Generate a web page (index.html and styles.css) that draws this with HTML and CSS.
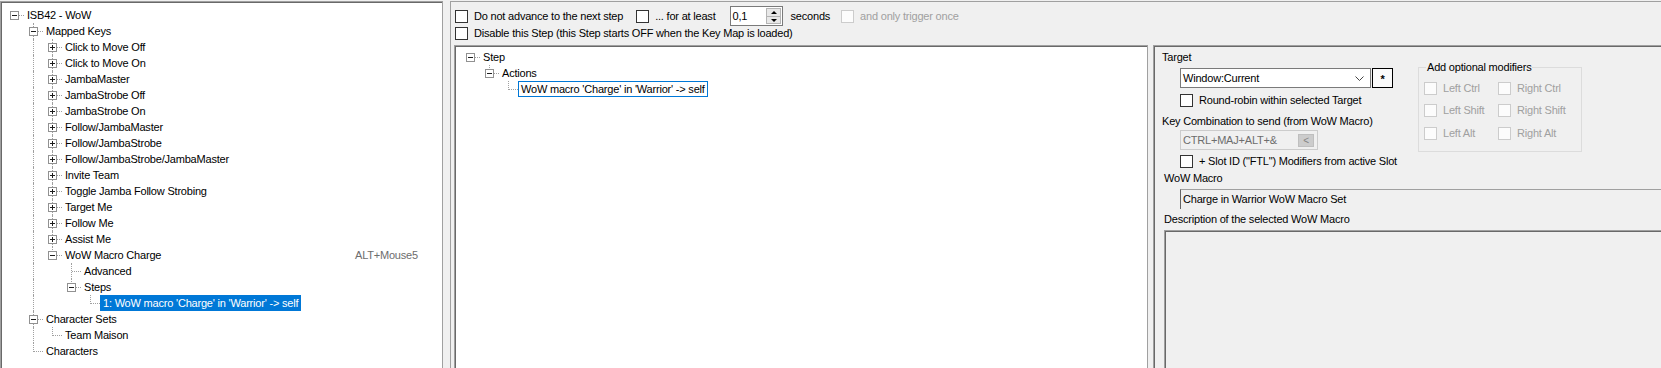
FILE: index.html
```html
<!DOCTYPE html>
<html>
<head>
<meta charset="utf-8">
<title>ISB42 - WoW</title>
<link rel="stylesheet" href="styles.css">
</head>
<body>
<div class="app">
  <div class="tree left-tree">
    <div class="row"><span class="g r"><span class="box"></span></span><span class="lbl">ISB42 - WoW</span></div>
    <div class="row"><span class="g"></span><span class="g t"><span class="box"></span></span><span class="lbl">Mapped Keys</span></div>
    <div class="row"><span class="g"></span><span class="g v"></span><span class="g t"><span class="box plus"></span></span><span class="lbl">Click to Move Off</span></div>
    <div class="row"><span class="g"></span><span class="g v"></span><span class="g t"><span class="box plus"></span></span><span class="lbl">Click to Move On</span></div>
    <div class="row"><span class="g"></span><span class="g v"></span><span class="g t"><span class="box plus"></span></span><span class="lbl">JambaMaster</span></div>
    <div class="row"><span class="g"></span><span class="g v"></span><span class="g t"><span class="box plus"></span></span><span class="lbl">JambaStrobe Off</span></div>
    <div class="row"><span class="g"></span><span class="g v"></span><span class="g t"><span class="box plus"></span></span><span class="lbl">JambaStrobe On</span></div>
    <div class="row"><span class="g"></span><span class="g v"></span><span class="g t"><span class="box plus"></span></span><span class="lbl">Follow/JambaMaster</span></div>
    <div class="row"><span class="g"></span><span class="g v"></span><span class="g t"><span class="box plus"></span></span><span class="lbl">Follow/JambaStrobe</span></div>
    <div class="row"><span class="g"></span><span class="g v"></span><span class="g t"><span class="box plus"></span></span><span class="lbl">Follow/JambaStrobe/JambaMaster</span></div>
    <div class="row"><span class="g"></span><span class="g v"></span><span class="g t"><span class="box plus"></span></span><span class="lbl">Invite Team</span></div>
    <div class="row"><span class="g"></span><span class="g v"></span><span class="g t"><span class="box plus"></span></span><span class="lbl">Toggle Jamba Follow Strobing</span></div>
    <div class="row"><span class="g"></span><span class="g v"></span><span class="g t"><span class="box plus"></span></span><span class="lbl">Target Me</span></div>
    <div class="row"><span class="g"></span><span class="g v"></span><span class="g t"><span class="box plus"></span></span><span class="lbl">Follow Me</span></div>
    <div class="row"><span class="g"></span><span class="g v"></span><span class="g t"><span class="box plus"></span></span><span class="lbl">Assist Me</span></div>
    <div class="row"><span class="g"></span><span class="g v"></span><span class="g l"><span class="box"></span></span><span class="lbl">WoW Macro Charge</span><span class="hk">ALT+Mouse5</span></div>
    <div class="row"><span class="g"></span><span class="g v"></span><span class="g"></span><span class="g t"></span><span class="lbl">Advanced</span></div>
    <div class="row"><span class="g"></span><span class="g v"></span><span class="g"></span><span class="g l"><span class="box"></span></span><span class="lbl">Steps</span></div>
    <div class="row"><span class="g"></span><span class="g v"></span><span class="g"></span><span class="g"></span><span class="g l"></span><span class="lbl sel">1: WoW macro 'Charge' in 'Warrior' -&gt; self</span></div>
    <div class="row"><span class="g"></span><span class="g t"><span class="box"></span></span><span class="lbl">Character Sets</span></div>
    <div class="row"><span class="g"></span><span class="g v"></span><span class="g l"></span><span class="lbl">Team Maison</span></div>
    <div class="row"><span class="g"></span><span class="g l"></span><span class="lbl">Characters</span></div>
  </div>

  <div class="main">
    <div class="opts">
      <div class="opt-row first">
        <span class="cb"></span><span class="cb-text">Do not advance to the next step</span>
        <span class="cb cb-second"></span><span class="cb-text">... for at least</span>
        <div class="spin">
          <span class="spin-val">0,1</span>
          <span class="spin-btns"><span class="sb up"></span><span class="sb dn"></span></span>
        </div>
        <span class="seconds">seconds</span>
        <span class="cb dis cb-once"></span><span class="cb-text dis-text">and only trigger once</span>
      </div>
      <div class="opt-row second">
        <span class="cb"></span><span class="cb-text">Disable this Step (this Step starts OFF when the Key Map is loaded)</span>
      </div>
    </div>

    <div class="work">
      <div class="tree mid-tree">
        <div class="row"><span class="g r"><span class="box"></span></span><span class="lbl">Step</span></div>
        <div class="row"><span class="g"></span><span class="g l"><span class="box"></span></span><span class="lbl">Actions</span></div>
        <div class="row"><span class="g"></span><span class="g"></span><span class="g l"></span><span class="lbl focus">WoW macro 'Charge' in 'Warrior' -&gt; self</span></div>
      </div>

      <div class="props">
        <div class="rp-top">
          <div class="rp-left">
            <div class="plabel target-label">Target</div>
            <div class="combo-line">
              <div class="combo">
                <span>Window:Current</span>
                <svg class="chev" width="9" height="5" viewBox="0 0 9 5"><polyline points="0.5,0.5 4.5,4.5 8.5,0.5" fill="none" stroke="#444" stroke-width="1"/></svg>
              </div>
              <div class="star">*</div>
            </div>
            <div class="check-line rr"><span class="cb"></span><span class="cb-text">Round-robin within selected Target</span></div>
            <div class="plabel key-label">Key Combination to send (from WoW Macro)</div>
            <div class="keybox">
              <span>CTRL+MAJ+ALT+&amp;</span>
              <span class="keybtn">&lt;</span>
            </div>
            <div class="check-line slot"><span class="cb"></span><span class="cb-text">+ Slot ID ("FTL") Modifiers from active Slot</span></div>
          </div>
          <div class="grp">
            <span class="grp-title">Add optional modifiers</span>
            <div class="mods">
              <div class="mod"><span class="cb dis"></span><span class="cb-text dis-text">Left Ctrl</span></div>
              <div class="mod"><span class="cb dis"></span><span class="cb-text dis-text">Right Ctrl</span></div>
              <div class="mod"><span class="cb dis"></span><span class="cb-text dis-text">Left Shift</span></div>
              <div class="mod"><span class="cb dis"></span><span class="cb-text dis-text">Right Shift</span></div>
              <div class="mod"><span class="cb dis"></span><span class="cb-text dis-text">Left Alt</span></div>
              <div class="mod"><span class="cb dis"></span><span class="cb-text dis-text">Right Alt</span></div>
            </div>
          </div>
        </div>
        <div class="plabel sec-label macro-label">WoW Macro</div>
        <div class="macrobox">Charge in Warrior WoW Macro Set</div>
        <div class="plabel sec-label desc-label">Description of the selected WoW Macro</div>
        <div class="descbox"></div>
      </div>
    </div>
  </div>
</div>
</body>
</html>
```

FILE: styles.css
```css
* { box-sizing: border-box; }
html, body { margin: 0; padding: 0; }
body {
  width: 1661px;
  height: 368px;
  overflow: hidden;
  background: #f0f0f0;
  color: #000;
  font-family: "Liberation Sans", Arial, sans-serif;
  font-size: 11px;
  line-height: 13px;
  letter-spacing: -0.2px;
}

.app {
  display: flex;
  height: 368px;
  padding-top: 1px;
}

/* ---------- tree views ---------- */
.tree {
  background: #fff;
  border-top: 1px solid #a0a0a0;
  border-left: 1px solid #a0a0a0;
  border-right: 1px solid #a0a0a0;
  box-shadow: inset 1px 1px 0 #696969;
}
.left-tree {
  width: 443px;
  flex: none;
  padding: 5px 0 0 4px;
}
.row {
  display: flex;
  height: 16px;
  position: relative;
  white-space: nowrap;
}
.g {
  width: 19px;
  height: 16px;
  flex: none;
  position: relative;
}
.g.v::before,
.g.t::before {
  content: "";
  position: absolute;
  left: 9px;
  top: 0;
  bottom: 0;
  border-left: 1px dotted #a0a0a0;
}
.g.l::before {
  content: "";
  position: absolute;
  left: 9px;
  top: 0;
  height: 9px;
  border-left: 1px dotted #a0a0a0;
}
.g.t::after,
.g.l::after,
.g.r::after {
  content: "";
  position: absolute;
  left: 10px;
  right: 0;
  top: 8px;
  border-top: 1px dotted #a0a0a0;
}
.box {
  position: absolute;
  left: 5px;
  top: 4px;
  width: 9px;
  height: 9px;
  border: 1px solid #919191;
  background: #fff;
  z-index: 1;
}
.box::before {
  content: "";
  position: absolute;
  left: 1px;
  top: 3px;
  width: 5px;
  height: 1px;
  background: #1e1e1e;
}
.box.plus::after {
  content: "";
  position: absolute;
  left: 3px;
  top: 1px;
  width: 1px;
  height: 5px;
  background: #1e1e1e;
}
.lbl {
  padding: 0 3px;
  line-height: 16px;
  height: 16px;
}
.lbl.sel {
  background: #0078d7;
  color: #fff;
}
.lbl.focus {
  border: 1px solid #0078d7;
  padding: 0 2px;
  line-height: 14px;
}
.hk {
  position: absolute;
  left: 350px;
  top: 0;
  line-height: 16px;
  color: #6d6d6d;
}

/* ---------- main area ---------- */
.main {
  flex: 1;
  margin-left: 7px;
  display: flex;
  flex-direction: column;
  border-top: 1px solid #a0a0a0;
  border-left: 1px solid #a0a0a0;
  min-width: 0;
}
.opts {
  padding-left: 4px;
}
.opt-row {
  display: flex;
  align-items: center;
  white-space: nowrap;
}
.opt-row.first {
  height: 20px;
  margin-top: 4px;
}
.opt-row.second {
  height: 13px;
  margin-top: 1px;
}
.cb {
  width: 13px;
  height: 13px;
  flex: none;
  border: 1px solid #333;
  background: #fff;
}
.cb.dis {
  border-color: #cccccc;
  background: #fcfcfc;
}
.cb-text {
  margin-left: 6px;
}
.dis-text {
  color: #a0a0a0;
}
.cb-second { margin-left: 13px; }
.cb-once { margin-left: 11px; }
.seconds { margin-left: 8px; }

.spin {
  width: 53px;
  height: 20px;
  margin-left: 14px;
  border: 1px solid #7a7a7a;
  background: #fff;
  display: flex;
}
.spin-val {
  flex: 1;
  padding-left: 2px;
  line-height: 18px;
}
.spin-btns {
  width: 16px;
  display: flex;
  flex-direction: column;
  padding: 1px 1px 1px 0;
}
.sb {
  flex: 1;
  position: relative;
  background: #e8e8e8;
  border: 1px solid #b4b4b4;
}
.sb.up { border-bottom: none; }
.sb::after {
  content: "";
  position: absolute;
  left: 4px;
  border-left: 3px solid transparent;
  border-right: 3px solid transparent;
}
.sb.up::after {
  top: 2px;
  border-bottom: 3px solid #000;
}
.sb.dn::after {
  top: 2px;
  border-top: 3px solid #000;
}

.work {
  flex: 1;
  display: flex;
  margin-top: 5px;
  padding-left: 3px;
  min-height: 0;
}
.mid-tree {
  width: 694px;
  flex: none;
  padding: 3px 0 0 6px;
}

/* ---------- properties panel ---------- */
.props {
  flex: 1;
  margin-left: 5px;
  border-top: 1px solid #a0a0a0;
  border-left: 1px solid #a0a0a0;
  box-shadow: inset 1px 1px 0 #696969;
  overflow: hidden;
  min-width: 0;
  white-space: nowrap;
}
.rp-top {
  display: flex;
}
.rp-left {
  width: 264px;
  flex: none;
}
.plabel {
  height: 13px;
}
.target-label {
  margin-top: 5px;
  padding-left: 8px;
}
.combo-line {
  display: flex;
  margin: 4px 0 0 26px;
}
.combo {
  width: 191px;
  height: 20px;
  border: 1px solid #7a7a7a;
  background: #fff;
  display: flex;
  align-items: center;
  padding-left: 2px;
}
.chev {
  margin-left: auto;
  margin-right: 6px;
}
.star {
  width: 21px;
  height: 20px;
  margin-left: 1px;
  border: 1px solid #000;
  background: #fbfbfb;
  text-align: center;
  font-weight: bold;
  line-height: 20px;
}
.check-line {
  display: flex;
  align-items: center;
  height: 13px;
  margin-left: 26px;
}
.check-line.rr { margin-top: 6px; }
.key-label {
  margin-top: 8px;
  padding-left: 8px;
}
.keybox {
  width: 138px;
  height: 20px;
  margin: 2px 0 0 26px;
  border: 1px solid #cccccc;
  background: #f0f0f0;
  color: #6d6d6d;
  display: flex;
  align-items: center;
  padding-left: 2px;
}
.keybtn {
  margin-left: auto;
  margin-right: 3px;
  width: 16px;
  height: 13px;
  background: #cccccc;
  border: 1px solid #bfbfbf;
  color: #838383;
  text-align: center;
  line-height: 11px;
  font-size: 10px;
}
.check-line.slot { margin-top: 5px; }

.grp {
  position: relative;
  width: 164px;
  height: 85px;
  margin-top: 21px;
  border: 1px solid #dcdcdc;
  padding: 9px 0 0 5px;
}
.grp-title {
  position: absolute;
  top: -7px;
  left: 7px;
  padding: 0 1px;
  background: #f0f0f0;
  line-height: 13px;
}
.mods {
  display: grid;
  grid-template-columns: 74px 80px;
  grid-auto-rows: 22.5px;
}
.mod {
  display: flex;
  align-items: center;
}

.sec-label {
  padding-left: 10px;
}
.macro-label { margin-top: 4px; }
.macrobox {
  height: 20px;
  margin: 4px -20px 0 26px;
  border-top: 1px solid #a0a0a0;
  border-left: 1px solid #646464;
  background: #f0f0f0;
  padding-left: 2px;
  line-height: 18px;
}
.desc-label { margin-top: 4px; }
.descbox {
  height: 200px;
  margin: 4px -20px 0 10px;
  border-top: 1px solid #a0a0a0;
  border-left: 1px solid #a0a0a0;
  box-shadow: inset 1px 1px 0 #696969;
  background: #f0f0f0;
}
```
